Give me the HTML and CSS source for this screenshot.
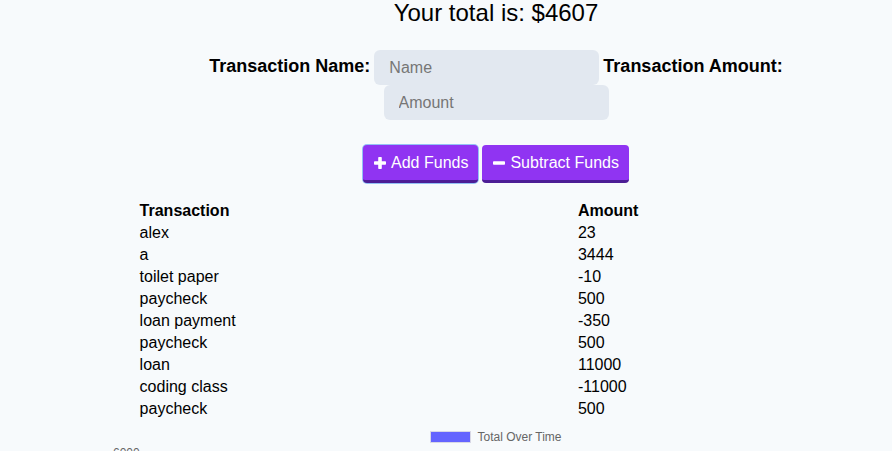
FILE: index.html
```html
<!DOCTYPE html>
<html>
<head>
<meta charset="utf-8">
<link rel="stylesheet" href="styles.css">
</head>
<body>
<div class="page">
  <h1 class="total">Your total is: $4607</h1>
  <form class="entry">
    <label class="lbl">Transaction Name:</label> <input class="field field-name" type="text" placeholder="Name"> <label class="lbl">Transaction Amount:</label> <input class="field field-amount" type="text" placeholder="Amount">
  </form>
  <div class="actions">
    <button class="btn btn-focus" type="button"><svg class="ico" viewBox="0 0 12 12" width="12" height="12"><rect x="4.2" y="0" width="3.6" height="12" rx="0.8" fill="#fff"/><rect x="0" y="4.2" width="12" height="3.6" rx="0.8" fill="#fff"/></svg>Add Funds</button>
    <button class="btn" type="button"><svg class="ico" viewBox="0 0 12 12" width="12" height="12"><rect x="0" y="4.2" width="12" height="3.6" rx="0.8" fill="#fff"/></svg>Subtract Funds</button>
  </div>
  <table class="tx">
    <thead>
      <tr><th class="col-name">Transaction</th><th>Amount</th></tr>
    </thead>
    <tbody>
      <tr><td>alex</td><td>23</td></tr>
      <tr><td>a</td><td>3444</td></tr>
      <tr><td>toilet paper</td><td>-10</td></tr>
      <tr><td>paycheck</td><td>500</td></tr>
      <tr><td>loan payment</td><td>-350</td></tr>
      <tr><td>paycheck</td><td>500</td></tr>
      <tr><td>loan</td><td>11000</td></tr>
      <tr><td>coding class</td><td>-11000</td></tr>
      <tr><td>paycheck</td><td>500</td></tr>
    </tbody>
  </table>
  <div class="chart">
    <div class="legend"><span class="legend-box"></span><span class="legend-text">Total Over Time</span></div>
    <div class="axis-label">6000</div>
  </div>
</div>
</body>
</html>
```
FILE: styles.css
```css
html, body {
  margin: 0;
  padding: 0;
  background: #f7fafc;
}
body {
  font-family: "Liberation Sans", Arial, sans-serif;
  color: #000;
}
.page {
  margin-left: 100px;
  text-align: center;
}
.total {
  margin: 0;
  padding-top: 1px;
  font-size: 24px;
  font-weight: normal;
  line-height: 23px;
}
.entry {
  margin: 26px 0 0;
  line-height: 35px;
  font-size: 0;
}
.lbl {
  display: inline-block;
  font-size: 18px;
  font-weight: bold;
  line-height: 33px;
  vertical-align: top;
}
.field {
  box-sizing: border-box;
  width: 225px;
  height: 35px;
  margin: 0 4px;
  border: none;
  border-radius: 6px;
  background: #e2e8f0;
  padding: 0 15px;
  font-family: "Liberation Sans", Arial, sans-serif;
  font-size: 16px;
  color: #000;
  vertical-align: top;
  outline: none;
}
.field::placeholder {
  color: #767676;
}
.actions {
  margin-top: 25px;
  display: flex;
  justify-content: center;
  gap: 4px;
}
.btn {
  box-sizing: border-box;
  height: 38px;
  display: inline-flex;
  align-items: center;
  gap: 5px;
  padding: 0 10px 0 11px;
  background: #9034f2;
  color: #fff;
  border: none;
  border-bottom: 3px solid #4c1d95;
  border-radius: 4px;
  font-family: "Liberation Sans", Arial, sans-serif;
  font-size: 16px;
}
.btn-focus {
  box-shadow: 0 0 0 1px #93c1f5;
}
.ico {
  display: block;
  flex: none;
}
.tx {
  width: 90%;
  margin: 17px auto 0;
  border-collapse: collapse;
  text-align: left;
  font-size: 16px;
}
.tx th, .tx td {
  padding: 0;
  line-height: 22px;
}
.tx th {
  font-weight: bold;
}
.col-name {
  width: 61.5%;
}
.chart {
  margin-top: 1px;
  font-size: 12px;
  color: #666;
}
.legend {
  padding-top: 10px;
  display: flex;
  justify-content: center;
  align-items: center;
  gap: 6px;
  height: 12px;
  line-height: 12px;
}
.legend-box {
  box-sizing: border-box;
  width: 41px;
  height: 12px;
  background: #6464ff;
  border: 1.5px solid #d8d8e6;
}
.axis-label {
  text-align: left;
  padding-left: 13px;
  margin-top: 3px;
  line-height: 14px;
}
```
